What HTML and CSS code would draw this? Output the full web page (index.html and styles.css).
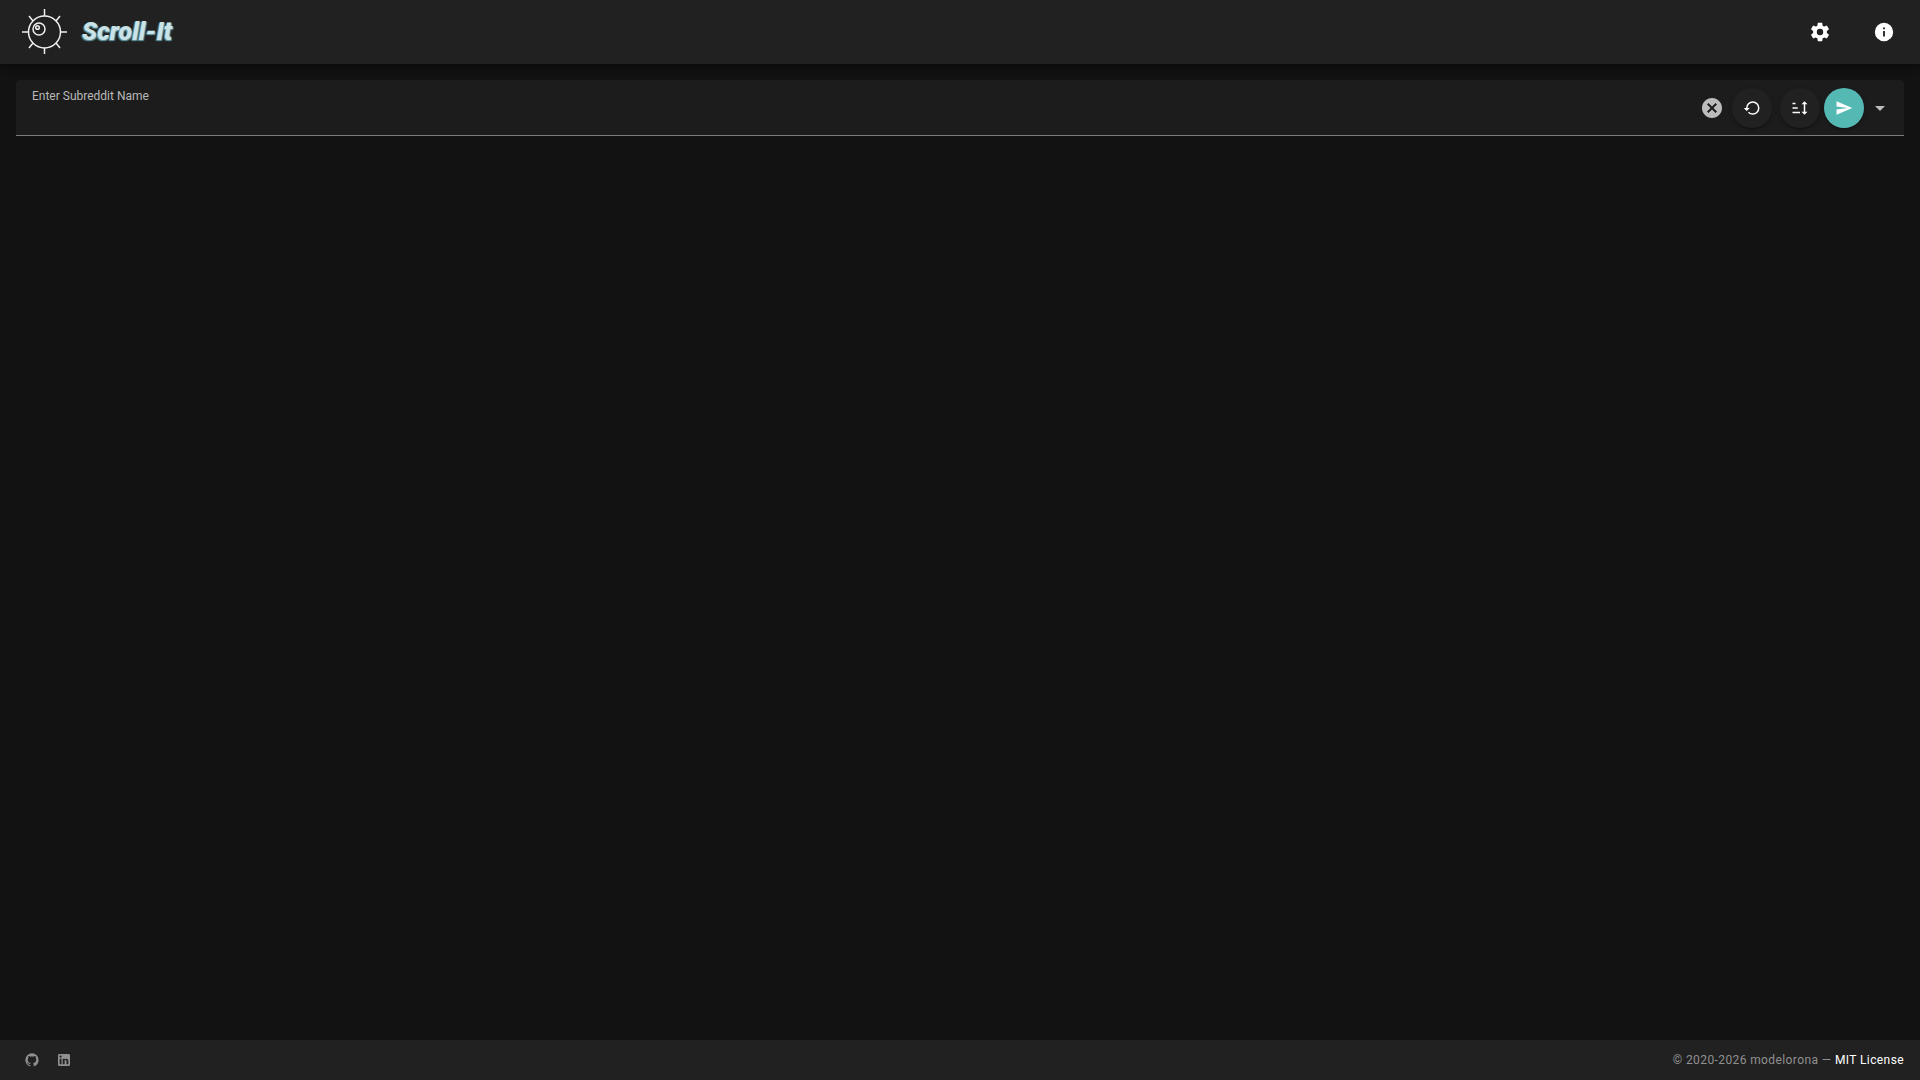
FILE: index.html
```html
<!DOCTYPE html>
<html lang="en">
<head>
<meta charset="utf-8">
<title>Scroll-It</title>
<link rel="stylesheet" href="styles.css">
</head>
<body>
<header class="app-bar">
  <a class="brand" href="#">
    <svg class="brand-mark" viewBox="0 0 48 48" aria-hidden="true">
      <circle cx="24.5" cy="24" r="16"/>
      <circle cx="19" cy="21" r="6"/>
      <circle cx="17.5" cy="19.5" r="1.8"/>
      <path d="M24.5 1v7M24.5 40v6M2 24h6.500M40.500 24h6.500M9 8l4 5M40 8l-4 5M9 40l4-5M40 40l-4-5"/>
    </svg>
    <span class="brand-name">Scroll-It</span>
  </a>
  <nav class="app-actions">
    <button class="icon-button" type="button" aria-label="Settings">
      <svg class="icon" viewBox="0 0 24 24"><path d="M12,15.5A3.5,3.5 0 0,1 8.5,12A3.5,3.5 0 0,1 12,8.5A3.5,3.5 0 0,1 15.5,12A3.5,3.5 0 0,1 12,15.5M19.43,12.97C19.47,12.65 19.5,12.33 19.5,12C19.5,11.67 19.47,11.34 19.43,11L21.54,9.37C21.73,9.22 21.78,8.95 21.66,8.73L19.66,5.27C19.54,5.05 19.27,4.96 19.05,5.05L16.56,6.05C16.04,5.66 15.5,5.32 14.87,5.07L14.5,2.42C14.46,2.18 14.25,2 14,2H10C9.75,2 9.54,2.18 9.5,2.42L9.13,5.07C8.5,5.32 7.96,5.66 7.44,6.05L4.95,5.05C4.73,4.96 4.46,5.05 4.34,5.27L2.34,8.73C2.21,8.95 2.27,9.22 2.46,9.37L4.57,11C4.53,11.34 4.5,11.67 4.5,12C4.5,12.33 4.53,12.65 4.57,12.97L2.46,14.63C2.27,14.78 2.21,15.05 2.34,15.27L4.34,18.73C4.46,18.95 4.73,19.03 4.95,18.95L7.44,17.94C7.96,18.34 8.5,18.68 9.13,18.93L9.5,21.58C9.54,21.82 9.75,22 10,22H14C14.25,22 14.46,21.82 14.5,21.58L14.87,18.93C15.5,18.67 16.04,18.34 16.56,17.94L19.05,18.95C19.27,19.03 19.54,18.95 19.66,18.73L21.66,15.27C21.78,15.05 21.73,14.78 21.54,14.63L19.43,12.97Z"/></svg>
    </button>
    <button class="icon-button" type="button" aria-label="About">
      <svg class="icon" viewBox="0 0 24 24"><path d="M13,9H11V7H13M13,17H11V11H13M12,2A10,10 0 0,0 2,12A10,10 0 0,0 12,22A10,10 0 0,0 22,12A10,10 0 0,0 12,2Z"/></svg>
    </button>
  </nav>
</header>
<main class="content">
  <form class="search-field">
    <div class="search-text">
      <label class="search-label" for="subreddit">Enter Subreddit Name</label>
      <input class="search-input" id="subreddit" type="text" autocomplete="off">
    </div>
    <div class="search-actions">
      <button class="plain-button" type="reset" aria-label="Clear">
        <svg class="icon icon-large" viewBox="0 0 24 24"><path d="M12,2C17.53,2 22,6.47 22,12C22,17.53 17.53,22 12,22C6.47,22 2,17.53 2,12C2,6.47 6.47,2 12,2M15.59,7L12,10.59L8.41,7L7,8.41L10.59,12L7,15.59L8.41,17L12,13.41L15.59,17L17,15.59L13.41,12L17,8.41L15.59,7Z"/></svg>
      </button>
      <button class="round-button" type="button" aria-label="Restore">
        <svg class="icon icon-small" viewBox="0 0 24 24"><path d="M13,3A9,9 0 0,0 4,12H1L4.89,15.89L4.96,16.03L9,12H6A7,7 0 0,1 13,5A7,7 0 0,1 20,12A7,7 0 0,1 13,19C11.07,19 9.32,18.21 8.06,16.94L6.64,18.36C8.27,20 10.5,21 13,21A9,9 0 0,0 22,12A9,9 0 0,0 13,3Z"/></svg>
      </button>
      <div class="send-group">
        <button class="round-button" type="button" aria-label="Sort">
          <svg class="icon icon-small" viewBox="0 0 24 24"><path d="M19,17H22L18,21L14,17H17V7H14L18,3L22,7H19M2,17H12V19H2M6,5V7H2V5M2,11H9V13H2V11Z"/></svg>
        </button>
        <button class="round-button round-button-primary" type="submit" aria-label="Load posts">
          <svg class="icon icon-small" viewBox="0 0 24 24"><path d="M2,21L23,12L2,3V10L17,12L2,14V21Z"/></svg>
        </button>
        <button class="plain-button" type="button" aria-label="Show suggestions">
          <svg class="icon icon-large" viewBox="0 0 24 24"><path d="M7,10L12,15L17,10H7Z"/></svg>
        </button>
      </div>
    </div>
  </form>
</main>
<footer class="footer">
  <nav class="social">
    <a class="social-link" href="#" aria-label="GitHub"><svg class="icon icon-tiny" viewBox="0 0 24 24"><path d="M12,2A10,10 0 0,0 2,12C2,16.42 4.87,20.17 8.84,21.5C9.34,21.58 9.5,21.27 9.5,21C9.5,20.77 9.5,20.14 9.5,19.31C6.73,19.91 6.14,17.97 6.14,17.97C5.68,16.81 5.03,16.5 5.03,16.5C4.12,15.88 5.1,15.9 5.1,15.9C6.1,15.97 6.63,16.93 6.63,16.93C7.5,18.45 8.97,18 9.54,17.76C9.63,17.11 9.89,16.67 10.17,16.42C7.95,16.17 5.62,15.31 5.62,11.5C5.62,10.39 6,9.5 6.65,8.79C6.55,8.54 6.2,7.5 6.75,6.15C6.75,6.15 7.59,5.88 9.5,7.17C10.29,6.95 11.15,6.84 12,6.84C12.85,6.84 13.71,6.95 14.5,7.17C16.41,5.88 17.25,6.15 17.25,6.15C17.8,7.5 17.45,8.54 17.35,8.79C18,9.5 18.38,10.39 18.38,11.5C18.38,15.32 16.04,16.16 13.81,16.41C14.17,16.72 14.5,17.33 14.5,18.26C14.5,19.6 14.5,20.68 14.5,21C14.5,21.27 14.66,21.59 15.17,21.5C19.14,20.16 22,16.42 22,12A10,10 0 0,0 12,2Z"/></svg></a>
    <a class="social-link" href="#" aria-label="LinkedIn"><svg class="icon icon-tiny" viewBox="0 0 24 24"><path d="M19 3A2 2 0 0 1 21 5V19A2 2 0 0 1 19 21H5A2 2 0 0 1 3 19V5A2 2 0 0 1 5 3H19M18.5 18.5V13.2A3.26 3.26 0 0 0 15.24 9.94C14.39 9.94 13.4 10.46 12.92 11.24V10.13H10.13V18.5H12.92V13.57C12.92 12.8 13.54 12.17 14.31 12.17A1.4 1.4 0 0 1 15.71 13.57V18.5H18.5M6.88 8.56A1.68 1.68 0 0 0 8.56 6.88C8.56 5.95 7.81 5.19 6.88 5.19A1.69 1.69 0 0 0 5.19 6.88C5.19 7.81 5.95 8.56 6.88 8.56M8.27 18.5V10.13H5.5V18.5H8.27Z"/></svg></a>
  </nav>
  <p class="copyright">© 2020-2026 modelorona — <a class="license-link" href="#">MIT License</a></p>
</footer>
</body>
</html>
```
FILE: styles.css
```css
*, *::before, *::after { box-sizing: border-box; }

body {
  display: flex;
  flex-direction: column;
  min-height: 100vh;
  margin: 0;
  background: #121212;
  color: #fff;
  font-family: Roboto, "Liberation Sans", sans-serif;
  font-size: 16px;
}

button {
  display: flex;
  align-items: center;
  justify-content: center;
  padding: 0;
  border: 0;
  background: none;
  color: inherit;
  cursor: pointer;
}

.app-bar {
  display: flex;
  align-items: center;
  justify-content: space-between;
  height: 64px;
  padding: 0 12px 0 20px;
  background: #212121;
  box-shadow: 0 2px 4px -1px rgba(0, 0, 0, .2), 0 4px 5px rgba(0, 0, 0, .14), 0 1px 10px rgba(0, 0, 0, .12);
}

.brand {
  display: flex;
  align-items: center;
  gap: 14px;
  color: #c9e3e9;
  text-decoration: none;
}

.brand-mark {
  width: 48px;
  height: 48px;
  fill: none;
  stroke: #f0f0f0;
  stroke-width: 1.5;
}

.brand-name {
  font-size: 25px;
  font-style: italic;
  font-weight: 900;
  line-height: 32px;
  text-shadow: 1px 1px 1px #5f929b, -1px 1px 1px #5f929b;
}

.app-actions { display: flex; gap: 16px; }

.icon-button { width: 48px; height: 48px; }

.icon {
  display: block;
  width: 22px;
  height: 22px;
  fill: currentColor;
}

.icon-large { width: 24px; height: 24px; }
.icon-small { width: 18px; height: 18px; }
.icon-tiny { width: 16px; height: 16px; }

.content { flex: 1; padding: 16px; }

.search-field {
  display: flex;
  justify-content: space-between;
  height: 56px;
  padding: 0 12px 0 16px;
  border-bottom: 1px solid #7d7d7d;
  border-radius: 4px 4px 0 0;
  background: #1c1c1c;
}

.search-text {
  display: flex;
  flex: 1;
  flex-direction: column;
  padding-top: 8px;
}

.search-label {
  color: #b8b8b8;
  font-size: 12px;
  line-height: 16px;
}

.search-input {
  flex: 1;
  width: 100%;
  padding: 0;
  border: 0;
  outline: 0;
  background: none;
  color: #fff;
  font: inherit;
}

.search-actions {
  display: flex;
  align-items: center;
  gap: 8px;
}

.plain-button { width: 24px; height: 24px; color: #bcbcbc; }

.send-group {
  display: flex;
  align-items: center;
  gap: 4px;
}

.round-button {
  width: 40px;
  height: 40px;
  border-radius: 50%;
  background: #212121;
  box-shadow: 0 3px 1px -2px rgba(0, 0, 0, .2), 0 2px 2px rgba(0, 0, 0, .14), 0 1px 5px rgba(0, 0, 0, .12);
}

.round-button-primary { background: #54b9b3; }

.footer {
  display: flex;
  align-items: center;
  justify-content: space-between;
  height: 40px;
  padding: 0 16px;
  background: #212121;
}

.social { display: flex; }

.social-link {
  display: flex;
  justify-content: center;
  width: 32px;
  color: #909090;
}

.copyright {
  margin: 0;
  color: #909090;
  font-size: 12px;
  letter-spacing: 0.0333em;
  line-height: 20px;
}

.license-link { color: #fff; text-decoration: none; }
```
